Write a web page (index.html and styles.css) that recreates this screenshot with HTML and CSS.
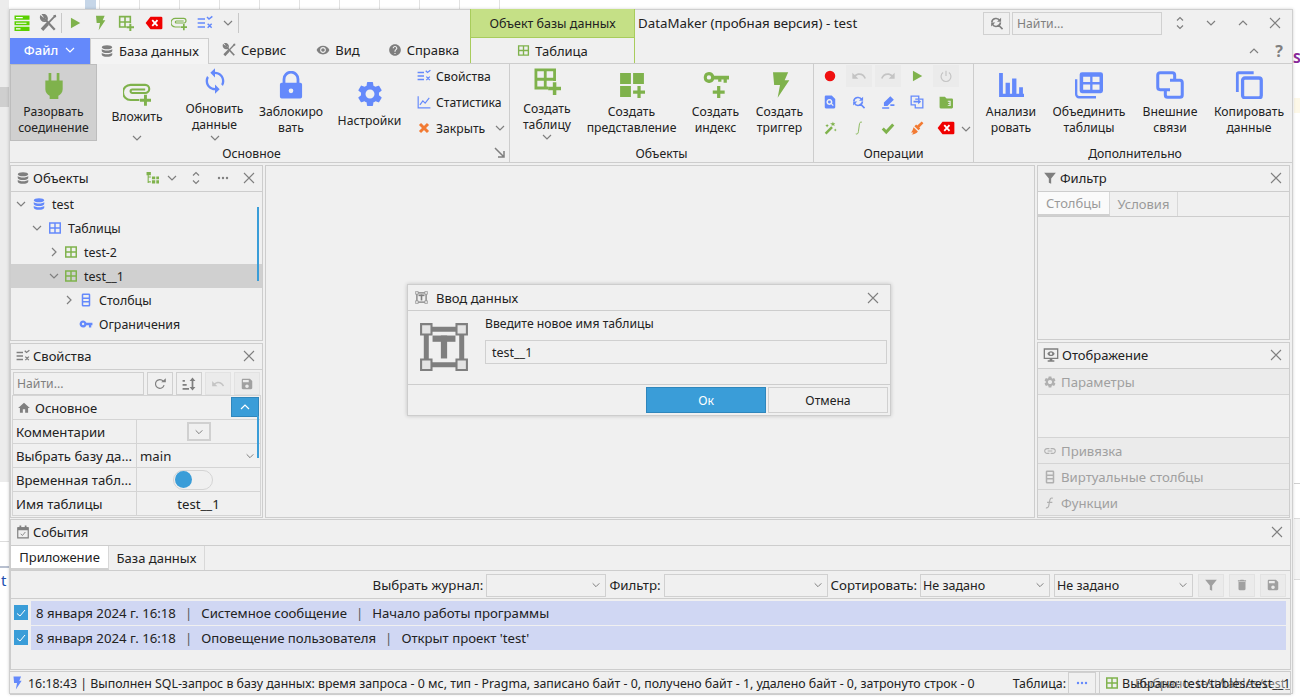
FILE: index.html
```html
<!DOCTYPE html>
<html lang="en">
<head>
    <meta charset="UTF-8">
    <title>DataMaker</title>
    <link rel="stylesheet" href="styles.css">
</head>
<body>
    <svg class="defs" xmlns="http://www.w3.org/2000/svg">
        <symbol id="db" viewBox="0 0 24 24"><path fill="currentColor" d="M12 2c5 0 9 1.500 9 3.500S17 9 12 9 3 7.500 3 5.500 7 2 12 2zM3 8.500C4.500 10.300 8 11 12 11s7.500-.7 9-2.500V12c0 2-4 3.500-9 3.500S3 14 3 12zM3 15c1.500 1.800 5 2.500 9 2.500s7.500-.7 9-2.500v3.500c0 2-4 3.500-9 3.500s-9-1.500-9-3.500z"/></symbol>
        <symbol id="tools" viewBox="0 0 24 24"><path fill="none" stroke="currentColor" stroke-width="3" d="M7 6l14 15"/><path fill="none" stroke="currentColor" stroke-width="2.500" d="M2.500 3.500a5 5 0 0 0 5.500 6l2.500-2.500a5 5 0 0 0-5-6L8 4.500 6 6.500z"/><path fill="none" stroke="currentColor" stroke-width="2.400" d="M20.500 3.500L11 13.500"/><path fill="none" stroke="currentColor" stroke-width="4.500" d="M11.500 13L4 21"/><path fill="currentColor" d="M19 1.500l3.500-.5.500 3-2.500 1z"/></symbol>
        <symbol id="play" viewBox="0 0 24 24"><path fill="currentColor" d="M5 3l16 9-16 9z"/></symbol>
        <symbol id="bolt" viewBox="0 0 24 24"><path fill="currentColor" d="M6 1h13l-3 7h4L10 23l2-11H7z"/></symbol>
        <symbol id="table" viewBox="0 0 24 24"><path fill="none" stroke="currentColor" stroke-width="2.500" d="M3 3.500h18v17H3zM3 12h18M12 3.500v17"/></symbol>
        <symbol id="table-plus" viewBox="0 0 24 24"><path fill="none" stroke="currentColor" stroke-width="2.400" d="M13 18H2.500V2.500h16V12M2.500 10.500h16M10.500 2.500V18"/><path fill="currentColor" d="M17 13h3v4h4v3h-4v4h-3v-4h-4v-3h4z"/></symbol>
        <symbol id="clear" viewBox="0 0 24 20"><path fill="currentColor" d="M7 1h15a2 2 0 0 1 2 2v14a2 2 0 0 1-2 2H7l-7-9z"/><path fill="none" stroke="#fff" stroke-width="2.600" d="M9.500 6l7.500 8M17 6l-7.500 8"/></symbol>
        <symbol id="clip" viewBox="0 0 24 24"><path fill="none" stroke="currentColor" stroke-width="1.800" d="M14 18H6.500a6 6 0 0 1 0-13H19a3.500 3.500 0 0 1 0 7H8a1.500 1.500 0 0 1 0-3h11"/><path fill="currentColor" d="M18 13.500h2.500V17H24v2.500h-3.500V23H18v-3.500h-3.500V17H18z"/></symbol>
        <symbol id="listx" viewBox="0 0 24 24"><path fill="none" stroke="currentColor" stroke-width="2.200" d="M1 6h11M1 12h11M1 18h11M15 3l3 3 5-4M16 13l6 6M22 13l-6 6"/></symbol>
        <symbol id="chart" viewBox="0 0 24 24"><path fill="none" stroke="currentColor" stroke-width="2" d="M2 2v20h21M5 17l5-7 4 4 7-9"/></symbol>
        <symbol id="cross" viewBox="0 0 24 24"><path fill="none" stroke="currentColor" stroke-width="6" d="M4 4l16 16M20 4L4 20"/></symbol>
        <symbol id="sync" viewBox="0 0 24 24"><path fill="currentColor" d="M12 4V1L8 5l4 4V6c3.310 0 6 2.690 6 6 0 1.010-.25 1.970-.7 2.800l1.460 1.460C19.540 15.030 20 13.570 20 12c0-4.420-3.580-8-8-8zm0 14c-3.310 0-6-2.690-6-6 0-1.010.25-1.970.7-2.800L5.240 7.740C4.460 8.970 4 10.430 4 12c0 4.420 3.580 8 8 8v3l4-4-4-4v3z"/></symbol>
        <symbol id="lock" viewBox="0 0 24 24"><path fill="none" stroke="currentColor" stroke-width="2.400" d="M6 11V7a6 6 0 0 1 12 0v4"/><path fill="currentColor" fill-rule="evenodd" d="M4 10h16a1.500 1.500 0 0 1 1.500 1.500V22a1.500 1.500 0 0 1-1.500 1.500H4A1.500 1.500 0 0 1 2.500 22V11.500A1.500 1.500 0 0 1 4 10zm8 5a2 2 0 1 0 0 4 2 2 0 0 0 0-4z"/></symbol>
        <symbol id="gear" viewBox="0 0 24 24"><path fill="currentColor" d="M19.140 12.940c.04-.3.06-.61.06-.94 0-.32-.02-.64-.07-.94l2.030-1.580c.18-.14.23-.41.12-.61l-1.920-3.320c-.12-.22-.37-.29-.59-.22l-2.390.96c-.5-.38-1.030-.7-1.620-.94l-.36-2.540c-.04-.24-.24-.41-.48-.41h-3.840c-.24 0-.43.17-.47.41l-.36 2.540c-.59.24-1.130.57-1.620.94l-2.390-.96c-.22-.08-.47 0-.59.22L2.740 8.870c-.12.21-.08.47.12.61l2.030 1.580c-.05.3-.09.63-.09.94s.02.64.07.94l-2.030 1.580c-.18.14-.23.41-.12.61l1.920 3.320c.12.22.37.29.59.22l2.390-.96c.5.38 1.030.7 1.620.94l.36 2.540c.05.24.24.41.48.41h3.840c.24 0 .44-.17.47-.41l.36-2.540c.59-.24 1.130-.56 1.620-.94l2.390.96c.22.08.47 0 .59-.22l1.920-3.320c.12-.22.07-.47-.12-.61l-2.010-1.580zM12 15.600c-1.980 0-3.600-1.620-3.600-3.600s1.620-3.600 3.600-3.600 3.600 1.620 3.600 3.600-1.620 3.600-3.600 3.600z"/></symbol>
        <symbol id="plug" viewBox="0 0 24 24"><path fill="currentColor" d="M7 0h2.500v7h5V0H17v7h3v8c0 3-2 5-4 6v3H8v-3c-2-1-4-3-4-6V7h3z"/></symbol>
        <symbol id="grid-plus" viewBox="0 0 24 24"><path fill="currentColor" d="M1 1h10v10H1zM13 1h10v10H13zM1 13h10v10H1zM17 13h3v4h4v3h-4v4h-3v-4h-4v-3h4z"/></symbol>
        <symbol id="key" viewBox="0 0 24 24"><path fill="currentColor" d="M12.650 10C11.830 7.670 9.610 6 7 6c-3.310 0-6 2.690-6 6s2.690 6 6 6c2.610 0 4.830-1.670 5.650-4H17v4h4v-4h2v-4H12.650zM7 14c-1.100 0-2-.9-2-2s.9-2 2-2 2 .9 2 2-.9 2-2 2z"/></symbol>
        <symbol id="key-plus" viewBox="0 0 24 24"><path fill="currentColor" fill-rule="evenodd" d="M5.500 0a5 5 0 0 1 4.800 3.500H24V7h-2v3h-3V7h-2v2h-3V7h-3.700a5 5 0 1 1-4.800-7zm0 3a2 2 0 1 0 0 4 2 2 0 0 0 0-4zM13 13h3v4h4v3h-4v4h-3v-4H9v-3h4z"/></symbol>
        <symbol id="bars" viewBox="0 0 24 24"><path fill="currentColor" d="M1 1h3.500v19H1zM1 20h23v3H1zM7 10h4v12H7zM13 6h4v16h-4zM19.500 14H23v8h-3.500z"/></symbol>
        <symbol id="join" viewBox="0 0 24 24"><path fill="none" stroke="currentColor" stroke-width="2" d="M1 7v13a2.500 2.500 0 0 0 2.500 2.500H18"/><path fill="currentColor" fill-rule="evenodd" d="M6 1h16a2 2 0 0 1 2 2v14a2 2 0 0 1-2 2H6a2 2 0 0 1-2-2V3a2 2 0 0 1 2-2zm1 4v4.500h6V5zm8 0v4.500h6V5zM7 11.500V16h6v-4.500zm8 0V16h6v-4.500z"/></symbol>
        <symbol id="links" viewBox="0 0 24 24"><path fill="none" stroke="currentColor" stroke-width="2.600" d="M16 9V3.500a2 2 0 0 0-2-2H3.500a2 2 0 0 0-2 2V14a2 2 0 0 0 2 2H12M8 15v5.500a2 2 0 0 0 2 2h10.500a2 2 0 0 0 2-2V10a2 2 0 0 0-2-2H12"/></symbol>
        <symbol id="copy" viewBox="0 0 24 24"><path fill="none" stroke="currentColor" stroke-width="2.400" d="M2 18V2.500a1 1 0 0 1 1-1h13"/><rect x="6.500" y="6" width="16" height="17" rx="2" fill="none" stroke="currentColor" stroke-width="2.800"/></symbol>
        <symbol id="eye" viewBox="0 0 24 24"><path fill="currentColor" d="M12 4.500C7 4.500 2.730 7.610 1 12c1.730 4.390 6 7.500 11 7.500s9.270-3.110 11-7.500c-1.730-4.390-6-7.500-11-7.500zM12 17c-2.760 0-5-2.240-5-5s2.240-5 5-5 5 2.240 5 5-2.240 5-5 5zm0-8c-1.660 0-3 1.340-3 3s1.340 3 3 3 3-1.340 3-3-1.340-3-3-3z"/></symbol>
        <symbol id="help" viewBox="0 0 24 24"><path fill="currentColor" d="M12 2C6.480 2 2 6.480 2 12s4.480 10 10 10 10-4.480 10-10S17.520 2 12 2zm1 17h-2v-2h2v2zm2.070-7.750l-.9.92C13.450 12.900 13 13.500 13 15h-2v-.5c0-1.100.45-2.100 1.170-2.830l1.240-1.260c.37-.36.59-.86.59-1.410 0-1.100-.9-2-2-2s-2 .9-2 2H8c0-2.210 1.790-4 4-4s4 1.790 4 4c0 .88-.36 1.680-.93 2.250z"/></symbol>
        <symbol id="chev" viewBox="0 0 12 12"><path fill="none" stroke="currentColor" stroke-width="1.200" d="M2 4l4 4 4-4"/></symbol>
        <symbol id="chev-r" viewBox="0 0 12 12"><path fill="none" stroke="currentColor" stroke-width="1.200" d="M4 2l4 4-4 4"/></symbol>
        <symbol id="caret" viewBox="0 0 12 12"><path fill="none" stroke="currentColor" stroke-width="1.200" d="M2 8l4-4 4 4"/></symbol>
        <symbol id="spin" viewBox="0 0 12 16"><path fill="none" stroke="currentColor" stroke-width="1.200" d="M3 5.500l3-3 3 3M3 10.500l3 3 3-3"/></symbol>
        <symbol id="close" viewBox="0 0 12 12"><path fill="none" stroke="currentColor" stroke-width="1.100" d="M1 1l10 10M11 1L1 11"/></symbol>
        <symbol id="corner" viewBox="0 0 12 12"><path fill="none" stroke="currentColor" stroke-width="1.500" d="M1 1l9 9M10 4v6H4"/></symbol>
        <symbol id="menu" viewBox="0 0 24 24"><path fill="#5ad000" d="M2 2h20v5.500H2zM2 9.500h20V15H2zM2 17h20v5.500H2z"/><path fill="#fff" d="M4 4h9v1.500H4zM4 11.500h14V13H4zM4 19h6v1.500H4z"/></symbol>
        <symbol id="tree" viewBox="0 0 24 24"><path fill="currentColor" d="M1 2h8v6H1zM3 8h2v14H3zM5 10h4v2H5zM11 10h6v5h-6zM19 10h5v5h-5zM5 19h4v2H5zM11 17h6v6h-6zM19 17h5v6h-5z"/></symbol>
        <symbol id="dots" viewBox="0 0 12 12"><circle cx="2" cy="6" r="1.200" fill="currentColor"/><circle cx="6" cy="6" r="1.200" fill="currentColor"/><circle cx="10" cy="6" r="1.200" fill="currentColor"/></symbol>
        <symbol id="cols" viewBox="0 0 24 24"><path fill="none" stroke="currentColor" stroke-width="2.600" d="M7 2h10a1 1 0 0 1 1 1v18a1 1 0 0 1-1 1H7a1 1 0 0 1-1-1V3a1 1 0 0 1 1-1zM6 9h12M6 15h12"/></symbol>
        <symbol id="reload" viewBox="0 0 24 24"><path fill="none" stroke="currentColor" stroke-width="2" d="M19 14a7.500 7.500 0 1 1-1.500-7"/><path fill="currentColor" d="M14 9h8V2z"/></symbol>
        <symbol id="sort" viewBox="0 0 24 24"><path fill="currentColor" d="M1 5h4v3H1zM1 12h7v3H1zM1 19h11v3H1zM18 1l5 6h-3.500v10H23l-5 6-5-6h3.500V7H13z"/></symbol>
        <symbol id="undo" viewBox="0 0 24 24"><path fill="currentColor" d="M12.500 8c-2.650 0-5.050.99-6.900 2.600L2 7v9h9l-3.620-3.620c1.390-1.160 3.160-1.880 5.120-1.880 3.540 0 6.550 2.310 7.600 5.500l2.370-.78C21.080 11.030 17.150 8 12.500 8z"/></symbol>
        <symbol id="redo" viewBox="0 0 24 24"><path fill="currentColor" transform="matrix(-1 0 0 1 24 0)" d="M12.500 8c-2.650 0-5.050.99-6.900 2.600L2 7v9h9l-3.620-3.620c1.390-1.160 3.160-1.880 5.120-1.880 3.540 0 6.550 2.310 7.600 5.500l2.370-.78C21.080 11.030 17.150 8 12.500 8z"/></symbol>
        <symbol id="save" viewBox="0 0 24 24"><path fill="currentColor" d="M17 3H5c-1.110 0-2 .9-2 2v14c0 1.100.89 2 2 2h14c1.100 0 2-.9 2-2V7l-4-4zm-5 16c-1.660 0-3-1.340-3-3s1.340-3 3-3 3 1.340 3 3-1.340 3-3 3zm3-10H5V5h10v4z"/></symbol>
        <symbol id="home" viewBox="0 0 24 24"><path fill="currentColor" d="M10 20v-6h4v6h5v-8h3L12 3 2 12h3v8z"/></symbol>
        <symbol id="filter" viewBox="0 0 24 24"><path fill="currentColor" d="M2 3h20l-8 10v9l-4-2v-7z"/></symbol>
        <symbol id="trash" viewBox="0 0 24 24"><path fill="currentColor" d="M6 19c0 1.100.9 2 2 2h8c1.100 0 2-.9 2-2V7H6v12zM19 4h-3.500l-1-1h-5l-1 1H5v2h14V4z"/></symbol>
        <symbol id="monitor" viewBox="0 0 24 24"><path fill="none" stroke="currentColor" stroke-width="2" d="M2 3h20v14H2z"/><path fill="currentColor" d="M10 17h4v3h3v2H7v-2h3zM12 6.500c2.500 0 4.500 1.500 5.500 3.500-1 2-3 3.500-5.500 3.500S7.500 12 6.500 10c1-2 3-3.500 5.500-3.500z"/><circle cx="12" cy="10" r="1.800" fill="#f0f0f0"/></symbol>
        <symbol id="link" viewBox="0 0 24 24"><path fill="currentColor" d="M3.900 12c0-1.710 1.390-3.100 3.100-3.100h4V7H7c-2.760 0-5 2.240-5 5s2.240 5 5 5h4v-1.900H7c-1.710 0-3.100-1.390-3.100-3.100zM8 13h8v-2H8v2zm9-6h-4v1.900h4c1.710 0 3.100 1.390 3.100 3.100s-1.390 3.100-3.100 3.100h-4V17h4c2.760 0 5-2.240 5-5s-2.240-5-5-5z"/></symbol>
        <symbol id="func" viewBox="0 0 24 24"><path fill="none" stroke="currentColor" stroke-width="2" d="M17 4c-4-2-5 1-6 6l-1 6c-.6 4-3 5-5 4M7 11h9"/></symbol>
        <symbol id="calendar" viewBox="0 0 24 24"><path fill="none" stroke="currentColor" stroke-width="2" d="M3 5h18v17H3z"/><path fill="currentColor" d="M3 4h18v5H3zM6 1h3v4H6zM15 1h3v4h-3z"/><path fill="none" stroke="currentColor" stroke-width="1.500" d="M8 15l3 3 5-6"/></symbol>
        <symbol id="input" viewBox="0 0 24 24"><path fill="none" stroke="currentColor" stroke-width="2.400" d="M3.500 3.500h17v17h-17z"/><path fill="#e4e4e4" stroke="currentColor" stroke-width="1" d="M1 1h5v5H1zM18 1h5v5h-5zM1 18h5v5H1zM18 18h5v5h-5z"/><rect x="6.500" y="6.500" width="11" height="3" fill="currentColor"/><rect x="10.500" y="6.500" width="3" height="11" fill="currentColor"/></symbol>
        <symbol id="rec" viewBox="0 0 24 24"><circle cx="12" cy="12" r="9" fill="currentColor"/></symbol>
        <symbol id="power" viewBox="0 0 24 24"><path fill="none" stroke="currentColor" stroke-width="2" d="M12 3v9M7 6a8.500 8.500 0 1 0 10 0"/></symbol>
        <symbol id="doc-find" viewBox="0 0 24 24"><path fill="currentColor" fill-rule="evenodd" d="M5 1h10l6 6v14a2 2 0 0 1-2 2H5a2 2 0 0 1-2-2V3a2 2 0 0 1 2-2zm6 6a5 5 0 1 0 2.900 9l3 3 1.600-1.600-3-3A5 5 0 0 0 11 7zm0 2.500a2.500 2.500 0 1 1 0 5 2.500 2.500 0 0 1 0-5z"/></symbol>
        <symbol id="find-sync" viewBox="0 0 24 24"><path fill="none" stroke="currentColor" stroke-width="2.600" d="M3 11a7.500 7.500 0 0 1 14-3M18 11a7.500 7.500 0 0 1-14 3M15.500 16.500l6 6"/><path fill="currentColor" d="M19 3v7h-7zM2 18v-7h7z"/></symbol>
        <symbol id="pen" viewBox="0 0 24 24"><path fill="currentColor" d="M16 2l6 6-11 11H5v-6zM2 21h12v2.500H2zM16 16h7v3h-7z"/></symbol>
        <symbol id="swap" viewBox="0 0 24 24"><path fill="none" stroke="currentColor" stroke-width="2.200" d="M15 7V2H2v15h6M9 7h13v15H9v-6"/><path fill="currentColor" d="M6 10h8V7l5 4.500-5 4.500v-3H6z"/></symbol>
        <symbol id="folder" viewBox="0 0 24 24"><path fill="currentColor" d="M1 3h9l3 3h9a2 2 0 0 1 2 2v13a2 2 0 0 1-2 2H3a2 2 0 0 1-2-2z"/><path fill="#f0f0f0" d="M15 10h5v9h-5v-1.500h3v-2.300h-2.500v-1.400H18V11.500h-3z"/></symbol>
        <symbol id="wand" viewBox="0 0 24 24"><path fill="currentColor" d="M14 9l3 3L6 23l-3-3zM17 1l1 3h3l-2 2 1 3-3-2-2 2V6l-3-2h4zM7 5l1 2 2 1-2 1-1 2-1-2-2-1 2-1zM21 13l.8 1.700 1.700.8-1.700.8L21 18l-.8-1.700-1.700-.8 1.700-.8z"/></symbol>
        <symbol id="integral" viewBox="0 0 24 24"><path fill="none" stroke="currentColor" stroke-width="1.500" d="M17 2c-3-1-4 1-4.500 5l-1.500 11c-.5 4-2 5-4.500 4"/></symbol>
        <symbol id="check" viewBox="0 0 24 24"><path fill="none" stroke="currentColor" stroke-width="5" d="M3 13l6 6L21 6"/></symbol>
        <symbol id="broom" viewBox="0 0 24 24"><path fill="currentColor" d="M20 1l3 3-7 7 1.500 2-3 3-7-7 3-3 2 1.500zM6 10.500l7.500 7.500c-2 3-5 5-11 5 2-1 3-2.500 3-3.500-1 .5-2.500.5-4 0 2-1.500 3.500-5 4.500-9z"/></symbol>
        <symbol id="tick" viewBox="0 0 12 12"><path fill="none" stroke="#fff" stroke-width="1" d="M2 6.500l3 2.500 5-6"/></symbol>
    </svg>

    <div class="desk-strip"></div>
    <div class="desk-patch"></div>
    <div class="desk-top"></div>
    <div class="desk-line"></div>
    <div class="desk-rule"></div>
    <div class="desk-cream"></div>
    <div class="desk-hair"></div>
    <div class="desk-box"></div>
    <span class="desk-s">S</span>
    <span class="desk-t">t</span>

    <div class="window">
        <div class="top">
            <div class="qat">
                <svg class="i18 q-menu"><use href="#menu"/></svg>
                <svg class="i18 gy q-tools"><use href="#tools"/></svg>
                <i class="vsep"></i>
                <svg class="i14 gr q-play"><use href="#play"/></svg>
                <svg class="i16 gr q-btn"><use href="#bolt"/></svg>
                <svg class="i16 gr q-btn"><use href="#table-plus"/></svg>
                <svg class="i-clear rd q-btn q-clear"><use href="#clear"/></svg>
                <svg class="i16 gr q-btn q-clip"><use href="#clip"/></svg>
                <svg class="i16 bl q-btn"><use href="#listx"/></svg>
                <svg class="i12 gy q-btn q-more"><use href="#chev"/></svg>
                <i class="vsep q-end"></i>
            </div>
            <div class="ctx-head">Объект базы данных</div>
            <div class="titlebar">
                <span class="app-title">DataMaker (пробная версия) - test</span>
                <button class="find-btn"><svg class="i14 gy"><use href="#find-sync"/></svg></button>
                <div class="field find-box">Найти...</div>
                <div class="win-ctl">
                    <svg class="i-spin gy"><use href="#spin"/></svg>
                    <svg class="i12 gy"><use href="#chev"/></svg>
                    <svg class="i12 gy"><use href="#caret"/></svg>
                    <svg class="i12 gy"><use href="#close"/></svg>
                </div>
            </div>
            <div class="tabs">
                <div class="file-tab">Файл <svg class="i12"><use href="#chev"/></svg></div>
                <div class="tab tab-on"><svg class="i14 gy"><use href="#db"/></svg>База данных</div>
                <div class="tab tab-srv"><svg class="i14 gy"><use href="#tools"/></svg>Сервис</div>
                <div class="tab tab-view"><svg class="i14 gy"><use href="#eye"/></svg>Вид</div>
                <div class="tab tab-help"><svg class="i14 gy"><use href="#help"/></svg>Справка</div>
            </div>
            <div class="ctx-tab"><svg class="i13 gr"><use href="#table"/></svg>Таблица</div>
            <div class="tabs-right">
                <svg class="i12 gy"><use href="#caret"/></svg>
                <span class="q-mark">?</span>
            </div>
        </div>

        <div class="ribbon">
            <section class="rsec sec-main">
                <div class="rbody">
                    <div class="rb rb-on rb-plug"><svg class="i26 gr"><use href="#plug"/></svg><span>Разорвать<br>соединение</span></div>
                    <div class="rb rb-attach"><svg class="i28 gr"><use href="#clip"/></svg><span>Вложить</span><svg class="i12 gy"><use href="#chev"/></svg></div>
                    <div class="rb rb-sync"><svg class="i28 bl"><use href="#sync"/></svg><span>Обновить<br>данные</span><svg class="i12 gy down"><use href="#chev"/></svg></div>
                    <div class="rb rb-lock"><svg class="i28 bl"><use href="#lock"/></svg><span>Заблокиро<br>вать</span></div>
                    <div class="rb rb-conf"><svg class="i30 bl"><use href="#gear"/></svg><span>Настройки</span></div>
                    <div class="rside">
                        <div><svg class="i14 bl"><use href="#listx"/></svg>Свойства</div>
                        <div><svg class="i14 bl"><use href="#chart"/></svg>Статистика</div>
                        <div><svg class="i12 or side-x"><use href="#cross"/></svg>Закрыть<svg class="i12 gy close-chev"><use href="#chev"/></svg></div>
                    </div>
                </div>
                <div class="rlabel label-main">Основное<svg class="i12 gy corner"><use href="#corner"/></svg></div>
            </section>
            <section class="rsec sec-obj">
                <div class="rbody">
                    <div class="rb rb-ctable"><svg class="i28 gr"><use href="#table-plus"/></svg><span>Создать<br>таблицу</span><svg class="i12 gy"><use href="#chev"/></svg></div>
                    <div class="rb rb-view"><svg class="i26 gr"><use href="#grid-plus"/></svg><span>Создать<br>представление</span></div>
                    <div class="rb rb-index"><svg class="i26 gr"><use href="#key-plus"/></svg><span>Создать<br>индекс</span></div>
                    <div class="rb rb-trig"><svg class="i28 gr"><use href="#bolt"/></svg><span>Создать<br>триггер</span></div>
                </div>
                <div class="rlabel">Объекты</div>
            </section>
            <section class="rsec sec-ops">
                <div class="ops">
                    <div class="ops-grid">
                        <span class="op"><svg class="i14 red"><use href="#rec"/></svg></span>
                        <span class="op op-off"><svg class="i16 dim"><use href="#undo"/></svg></span>
                        <span class="op op-off"><svg class="i16 dim"><use href="#redo"/></svg></span>
                        <span class="op"><svg class="i14 gr"><use href="#play"/></svg></span>
                        <span class="op op-off"><svg class="i14 dim"><use href="#power"/></svg></span>
                        <span class="op"><svg class="i14 bl"><use href="#doc-find"/></svg></span>
                        <span class="op"><svg class="i14 bl"><use href="#find-sync"/></svg></span>
                        <span class="op"><svg class="i14 bl"><use href="#pen"/></svg></span>
                        <span class="op"><svg class="i14 bl"><use href="#swap"/></svg></span>
                        <span class="op"><svg class="i14 gr"><use href="#folder"/></svg></span>
                        <span class="op"><svg class="i14 gr"><use href="#wand"/></svg></span>
                        <span class="op"><svg class="i14 gr"><use href="#integral"/></svg></span>
                        <span class="op"><svg class="i14 gr"><use href="#check"/></svg></span>
                        <span class="op"><svg class="i14 or"><use href="#broom"/></svg></span>
                        <span class="op"><svg class="i-clear rd"><use href="#clear"/></svg></span>
                    </div>
                    <svg class="i12 gy ops-chev"><use href="#chev"/></svg>
                </div>
                <div class="rlabel">Операции</div>
            </section>
            <section class="rsec sec-more">
                <div class="rbody">
                    <div class="rb rb-an"><svg class="i26 bl"><use href="#bars"/></svg><span>Анализи<br>ровать</span></div>
                    <div class="rb rb-join"><svg class="i28 bl"><use href="#join"/></svg><span>Объединить<br>таблицы</span></div>
                    <div class="rb rb-links"><svg class="i28 bl"><use href="#links"/></svg><span>Внешние<br>связи</span></div>
                    <div class="rb rb-copy"><svg class="i28 bl"><use href="#copy"/></svg><span>Копировать<br>данные</span></div>
                </div>
                <div class="rlabel label-more">Дополнительно</div>
            </section>
        </div>

        <div class="main">
            <div class="side">
                <div class="panel objects">
                    <div class="phead">
                        <svg class="i14 gy"><use href="#db"/></svg><span class="ptitle">Объекты</span>
                        <svg class="i13 gr"><use href="#tree"/></svg>
                        <svg class="i12 gy h-chev"><use href="#chev"/></svg>
                        <svg class="i-spin gy h-spin"><use href="#spin"/></svg>
                        <svg class="i12 gy h-dots"><use href="#dots"/></svg>
                        <svg class="i12 gy h-close"><use href="#close"/></svg>
                    </div>
                    <div class="tree">
                        <div class="row lv0"><svg class="i12 gy"><use href="#chev"/></svg><svg class="i14 bl"><use href="#db"/></svg>test</div>
                        <div class="row lv1"><svg class="i12 gy"><use href="#chev"/></svg><svg class="i14 bl"><use href="#table"/></svg>Таблицы</div>
                        <div class="row lv2"><svg class="i12 gy"><use href="#chev-r"/></svg><svg class="i14 gr"><use href="#table"/></svg>test-2</div>
                        <div class="row lv2 row-on"><svg class="i12 gy"><use href="#chev"/></svg><svg class="i14 gr"><use href="#table"/></svg>test__1</div>
                        <div class="row lv3"><svg class="i12 gy"><use href="#chev-r"/></svg><svg class="i14 bl"><use href="#cols"/></svg>Столбцы</div>
                        <div class="row lv3"><i class="no-chev"></i><svg class="i14 bl"><use href="#key"/></svg>Ограничения</div>
                        <i class="scroll tree-scroll"></i>
                    </div>
                </div>
                <div class="panel props">
                    <div class="phead">
                        <svg class="i14 gy"><use href="#listx"/></svg><span class="ptitle">Свойства</span>
                        <svg class="i12 gy h-close"><use href="#close"/></svg>
                    </div>
                    <div class="props-tools">
                        <div class="field props-find">Найти...</div>
                        <button class="tbtn"><svg class="i14 gy"><use href="#reload"/></svg></button>
                        <button class="tbtn"><svg class="i14 gy"><use href="#sort"/></svg></button>
                        <button class="tbtn tbtn-off"><svg class="i14 dim"><use href="#undo"/></svg></button>
                        <button class="tbtn tbtn-off"><svg class="i14 gy2"><use href="#save"/></svg></button>
                    </div>
                    <div class="grid">
                        <div class="grid-group"><svg class="i14 gy"><use href="#home"/></svg>Основное<span class="blue-btn"><svg class="i12"><use href="#caret"/></svg></span></div>
                        <div class="cell">Комментарии</div>
                        <div class="cell cell-c"><span class="mini-drop"><svg class="i10 gy"><use href="#chev"/></svg></span></div>
                        <div class="cell">Выбрать базу да...</div>
                        <div class="cell cell-sel">main<svg class="i10 gy"><use href="#chev"/></svg></div>
                        <div class="cell">Временная табл...</div>
                        <div class="cell cell-c"><span class="toggle"><i></i></span></div>
                        <div class="cell">Имя таблицы</div>
                        <div class="cell cell-c">test__1</div>
                        <i class="scroll grid-scroll"></i>
                    </div>
                </div>
            </div>

            <div class="panel center">
                <div class="dialog">
                    <div class="dlg-head"><svg class="i13 gy"><use href="#input"/></svg><span>Ввод данных</span><svg class="i12 gy"><use href="#close"/></svg></div>
                    <div class="dlg-body">
                        <svg class="dlg-icon gy"><use href="#input"/></svg>
                        <div class="dlg-form">
                            <div>Введите новое имя таблицы</div>
                            <div class="field dlg-input">test__1</div>
                        </div>
                    </div>
                    <div class="dlg-foot">
                        <button class="btn btn-ok">Ок</button>
                        <button class="btn">Отмена</button>
                    </div>
                </div>
            </div>

            <div class="side">
                <div class="panel filter">
                    <div class="phead">
                        <svg class="i14 gy"><use href="#filter"/></svg><span class="ptitle">Фильтр</span>
                        <svg class="i12 gy h-close"><use href="#close"/></svg>
                    </div>
                    <div class="subtabs muted">
                        <div class="subtab subtab-on st-cols">Столбцы</div>
                        <div class="subtab st-cond">Условия</div>
                    </div>
                </div>
                <div class="panel display">
                    <div class="phead">
                        <svg class="i16 gy"><use href="#monitor"/></svg><span class="ptitle">Отображение</span>
                        <svg class="i12 gy h-close"><use href="#close"/></svg>
                    </div>
                    <div class="fold"><svg class="i14 dim2"><use href="#gear"/></svg>Параметры</div>
                    <div class="fold-space"></div>
                    <div class="fold"><svg class="i14 dim2"><use href="#link"/></svg>Привязка</div>
                    <div class="fold"><svg class="i14 dim2"><use href="#cols"/></svg>Виртуальные столбцы</div>
                    <div class="fold"><svg class="i14 dim2"><use href="#func"/></svg>Функции</div>
                </div>
            </div>
        </div>

        <div class="panel events">
            <div class="phead">
                <svg class="i14 gy"><use href="#calendar"/></svg><span class="ptitle">События</span>
                <svg class="i12 gy h-close"><use href="#close"/></svg>
            </div>
            <div class="subtabs">
                <div class="subtab subtab-on st-app">Приложение</div>
                <div class="subtab st-base">База данных</div>
            </div>
            <div class="ev-tools">
                <span>Выбрать журнал:</span>
                <div class="field sel sel-log"><svg class="i10 gy"><use href="#chev"/></svg></div>
                <span>Фильтр:</span>
                <div class="field sel sel-flt"><svg class="i10 gy"><use href="#chev"/></svg></div>
                <span>Сортировать:</span>
                <div class="field sel sel-sort">Не задано<svg class="i10 gy"><use href="#chev"/></svg></div>
                <div class="field sel sel-sort2">Не задано<svg class="i10 gy"><use href="#chev"/></svg></div>
                <button class="tbtn tbtn-off"><svg class="i14 gy2"><use href="#filter"/></svg></button>
                <button class="tbtn tbtn-off"><svg class="i14 gy2"><use href="#trash"/></svg></button>
                <button class="tbtn tbtn-off"><svg class="i14 gy2"><use href="#save"/></svg></button>
            </div>
            <div class="ev-row">
                <span class="chk"><svg class="i12"><use href="#tick"/></svg></span>
                <div class="ev-text">8 января 2024 г. 16:18<b>|</b>Системное сообщение<b>|</b>Начало работы программы</div>
            </div>
            <div class="ev-row">
                <span class="chk"><svg class="i12"><use href="#tick"/></svg></span>
                <div class="ev-text">8 января 2024 г. 16:18<b>|</b>Оповещение пользователя<b>|</b>Открыт проект 'test'</div>
            </div>
        </div>

        <div class="status">
            <svg class="i14 bl"><use href="#bolt"/></svg>
            <span class="st-msg">16:18:43 | Выполнен SQL-запрос в базу данных: время запроса - 0 мс, тип - Pragma, записано байт - 0, получено байт - 1, удалено байт - 0, затронуто строк - 0</span>
            <span>Таблица:</span>
            <span class="st-more"><svg class="i12 bl"><use href="#dots"/></svg></span>
            <span class="st-path"><svg class="i14 gr"><use href="#table"/></svg><span class="st-smear">Выбрано: test/tables/test__1</span></span>
        </div>
    </div>
</body>
</html>
```

FILE: styles.css
```css
*{
    margin: 0;
    padding: 0;
    box-sizing: border-box;
}
body{
    background-color: white;
    color: #222;
    font-family: "Noto Sans", sans-serif;
    font-size: 12.2px;
    width: 1300px;
    height: 700px;
    overflow: hidden;
    position: relative;
}
button{
    font: inherit;
    color: inherit;
}
i{
    font-style: normal;
}
.defs{
    position: absolute;
    width: 0;
    height: 0;
}
svg{
    flex: none;
    display: block;
}
.i10{ width: 10px; height: 10px; }
.i12{ width: 12px; height: 12px; }
.i13{ width: 13px; height: 13px; }
.i14{ width: 14px; height: 14px; }
.i16{ width: 16px; height: 16px; }
.i18{ width: 18px; height: 18px; }
.i26{ width: 26px; height: 26px; }
.i28{ width: 28px; height: 28px; }
.i30{ width: 30px; height: 30px; }
.i-clear{ width: 18px; height: 14px; }
.i-spin{ width: 12px; height: 16px; }
.gy{ color: #7f7f7f; }
.gy2{ color: #a0a0a0; }
.dim{ color: #c4c4c4; }
.dim2{ color: #b0b0b0; }
.gr{ color: #7fb24c; }
.bl{ color: #6489fb; }
.rd{ color: #f00000; }
.red{ color: #f01010; }
.or{ color: #f27a32; }

/* the desktop around the window */
.desk-strip{
    position: absolute;
    left: 0;
    top: 0;
    width: 9px;
    height: 482px;
    background-color: #ececec;
}
.desk-patch{
    position: absolute;
    left: 0;
    top: 87px;
    width: 9px;
    height: 20px;
    background-color: #cfcfcf;
}
.desk-top{
    position: absolute;
    left: 9px;
    top: 0;
    width: 1284px;
    height: 9px;
    background: linear-gradient(#c6d6e8, #c6d6e8) 76px 0 / 11px 9px no-repeat,
        repeating-linear-gradient(90deg, #e2e2e2 0 1px, transparent 1px 40px) 90px 0 / 410px 9px no-repeat;
}
.desk-line{
    position: absolute;
    left: 0;
    top: 566px;
    width: 9px;
    height: 2px;
    background-color: #b8c0d0;
}
.desk-rule{
    position: absolute;
    left: 0;
    top: 541px;
    width: 9px;
    height: 1px;
    background-color: #dcdcdc;
}
.desk-cream{
    position: absolute;
    left: 1294px;
    top: 98px;
    width: 6px;
    height: 15px;
    background-color: #fdf8e8;
}
.desk-hair{
    position: absolute;
    left: 1294px;
    top: 483px;
    width: 6px;
    height: 1px;
    background-color: #d0d0d0;
}
.desk-box{
    position: absolute;
    left: 1294px;
    top: 518px;
    width: 6px;
    height: 62px;
    background-color: #f5f5f5;
    border-top: 1px solid #dcdcdc;
    border-bottom: 1px solid #dcdcdc;
}
.desk-s{
    position: absolute;
    left: 1293px;
    top: 48px;
    font-size: 14px;
    font-weight: bold;
    color: #8a2a9a;
}
.desk-t{
    position: absolute;
    left: 1px;
    top: 570px;
    font-size: 15px;
    color: #2050b0;
}

.window{
    position: absolute;
    left: 9px;
    top: 9px;
    width: 1284px;
    height: 685px;
    background-color: #f0f0f0;
    border: 1px solid #cfcfcf;
    box-shadow: 0 0 3px rgba(0,0,0,0.18);
    display: flex;
    flex-direction: column;
}

/* title and tabs */
.top{
    display: grid;
    grid-template-columns: 460px 165px 1fr;
    grid-template-rows: 28px 25px;
    border-bottom: 1px solid #cdcdcd;
    flex: none;
}
.qat{
    display: flex;
    align-items: center;
    padding: 0 0 2px 3px;
}
.q-tools{ margin-left: 8px; }
.vsep{
    width: 1px;
    height: 20px;
    background-color: #c8c8c8;
    margin-left: 4px;
}
.q-play{ margin-left: 6px; }
.q-btn{ margin-left: 10px; }
.q-clear{ margin-left: 11px; }
.q-clip{ margin-left: 8px; }
.q-more{ margin-left: 9px; }
.q-end{ margin-left: 4px; }
.ctx-head{
    background-color: #c5e086;
    border-left: 1px solid #a8cc5c;
    border-right: 1px solid #a8cc5c;
    border-bottom: 1px solid #a8cc5c;
    display: flex;
    align-items: center;
    justify-content: center;
    font-size: 12.5px;
    margin-top: -1px;
}
.ctx-tab{
    border-left: 1px solid #a8cc5c;
    border-right: 1px solid #a8cc5c;
    display: flex;
    align-items: center;
    justify-content: center;
    gap: 5px;
    font-size: 13px;
}
.titlebar{
    display: flex;
    align-items: center;
    padding: 0 0 2px 3px;
}
.app-title{
    font-size: 13.3px;
    width: 345px;
}
.find-btn{
    width: 27px;
    height: 23px;
    border: 1px solid #d0d0d0;
    background: none;
    display: flex;
    align-items: center;
    justify-content: center;
    margin-right: 2px;
}
.field{
    border: 1px solid #d0d0d0;
    display: flex;
    align-items: center;
    background-color: #f0f0f0;
}
.find-box{
    width: 150px;
    height: 23px;
    padding-left: 4px;
    color: #808080;
}
.win-ctl{
    display: flex;
    align-items: center;
    gap: 20px;
    margin-left: 12px;
}
.win-ctl .i-spin{
    margin-right: -1px;
}
.tabs{
    display: flex;
    align-items: stretch;
    font-size: 13px;
}
.file-tab{
    width: 80px;
    background-color: #6489fb;
    color: white;
    display: flex;
    align-items: center;
    justify-content: center;
    gap: 6px;
    margin-bottom: -1px;
    padding-bottom: 2px;
    font-weight: 500;
}
.tab{
    display: flex;
    align-items: center;
    gap: 5px;
    padding-bottom: 2px;
}
.tab-on{
    width: 119px;
    justify-content: center;
    background-color: #f4f4f4;
    border: 1px solid #cdcdcd;
    border-bottom: 0;
    margin-bottom: -1px;
}
.tab-srv{ margin-left: 13px; }
.tab-view{ margin-left: 30px; }
.tab-help{ margin-left: 28px; }
.tabs-right{
    display: flex;
    align-items: center;
    justify-content: flex-end;
    gap: 15px;
    padding-right: 9px;
    color: #808080;
}
.q-mark{
    font-size: 16px;
    font-weight: bold;
    color: #808080;
}

/* ribbon */
.ribbon{
    display: flex;
    height: 99px;
    flex: none;
    border-bottom: 1px solid #cdcdcd;
}
.rsec{
    display: flex;
    flex-direction: column;
    border-right: 1px solid #cdcdcd;
}
.sec-main{ width: 500px; }
.sec-obj{ width: 304px; }
.sec-ops{ width: 160px; }
.sec-more{
    flex: 1;
    border-right: 0;
}
.rbody{
    flex: 1;
    display: flex;
}
.rlabel{
    height: 18px;
    flex: none;
    text-align: center;
    position: relative;
    line-height: 17px;
    padding-top: 1px;
}
.label-main{ padding-right: 16px; }
.label-more{ padding-left: 4px; }
.corner{
    position: absolute;
    right: 3px;
    top: 3px;
}
.rb{
    display: flex;
    flex-direction: column;
    align-items: center;
    text-align: center;
    line-height: 16px;
    flex: none;
}
.rb span{
    display: block;
}
.down{
    margin-top: -1px;
}
.rb-on{
    background-color: #d0d0d0;
    border: 1px solid #bdbdbd;
    height: 77px;
}
.rb-plug{ width: 87px; padding-top: 8px; }
.rb-plug span{ margin-top: 5px; }
.rb-attach{ width: 78px; margin-left: 1px; padding-top: 15px; }
.rb-attach span{ margin-top: 2px; }
.rb-attach .i12{ margin-top: 7px; }
.rb-sync{ width: 77px; padding-top: 3px; }
.rb-sync span{ margin-top: 6px; }
.rb-lock{ width: 76px; padding-top: 7px; }
.rb-lock span{ margin-top: 5px; }
.rb-conf{ width: 81px; padding-top: 15px; }
.rb-conf span{ margin-top: 4px; }
.rside{
    margin: -1px 0 0 7px;
    flex: 1;
}
.rside div{
    display: flex;
    align-items: center;
    height: 26px;
    gap: 5px;
}
.rside .side-x{
    margin: 0 1px;
}
.close-chev{
    margin-left: 4px;
}
.rb-ctable{ width: 74px; padding-top: 3px; }
.rb-ctable span{ margin-top: 6px; }
.rb-ctable .i12{ margin-top: -2px; }
.rb-view{ width: 95px; padding-top: 8px; }
.rb-view span{ margin-top: 6px; }
.rb-index{ width: 73px; padding-top: 8px; }
.rb-index span{ margin-top: 6px; }
.rb-trig{ width: 55px; padding-top: 7px; }
.rb-trig span{ margin-top: 5px; }
.ops{
    flex: 1;
    display: flex;
    padding-left: 1px;
    margin-top: -1px;
}
.ops-grid{
    display: grid;
    grid-template-columns: repeat(5, 29px);
    grid-auto-rows: 26px;
    align-items: center;
    justify-items: center;
}
.op{
    width: 26px;
    height: 22px;
    display: flex;
    align-items: center;
    justify-content: center;
}
.op-off{
    background-color: #ebebeb;
}
.ops-chev{
    margin-top: 60px;
    margin-left: 0;
}
.rb-an{ width: 74px; padding-top: 8px; }
.rb-an span{ margin-top: 6px; }
.rb-join{ width: 82px; padding-top: 7px; }
.rb-join span{ margin-top: 5px; }
.rb-links{ width: 80px; padding-top: 7px; }
.rb-links span{ margin-top: 5px; }
.rb-copy{ width: 78px; padding-top: 7px; }
.rb-copy span{ margin-top: 5px; }

/* panels */
.main{
    display: grid;
    grid-template-columns: 253px 770px 253px;
    gap: 2px;
    padding: 2px 1px 0 0;
    height: 355px;
    flex: none;
}
.side{
    display: flex;
    flex-direction: column;
    gap: 2px;
    min-height: 0;
}
.panel{
    border: 1px solid #cdcdcd;
    min-height: 0;
}
.objects{ height: 176px; }
.props{ flex: 1; }
.filter{ height: 175px; }
.display{ flex: 1; }
.phead{
    height: 26px;
    display: flex;
    align-items: center;
    padding: 0 0 2px 5px;
    border-bottom: 1px solid #cdcdcd;
    font-size: 13px;
}
.ptitle{
    flex: 1;
    margin-left: 3px;
}
.h-chev{ margin-left: 7px; }
.h-spin{ margin-left: 12px; }
.h-dots{ margin-left: 15px; }
.h-close{
    margin-left: 14px;
    margin-right: 7px;
}
.tree{
    position: relative;
    font-size: 12.4px;
}
.row{
    height: 24px;
    display: flex;
    align-items: center;
    gap: 4px;
}
.row > svg:nth-child(2){
    margin-right: 2px;
}
.lv0{ padding-left: 4px; }
.lv0 > svg:nth-child(1), .lv1 > svg:nth-child(1){
    margin-right: 1px;
}
.lv1{ padding-left: 20px; }
.lv2{ padding-left: 37px; }
.lv3{ padding-left: 52px; }
.row-on{
    background-color: #d0d0d0;
}
.no-chev{
    width: 12px;
}
.scroll{
    position: absolute;
    right: 3px;
    width: 2px;
    background-color: #3a9dd8;
}
.tree-scroll{
    top: 15px;
    height: 74px;
}
.props-tools{
    display: flex;
    gap: 3px;
    padding: 2px 2px 0 2px;
}
.props-find{
    width: 132px;
    height: 23px;
    padding-left: 3px;
    color: #808080;
}
.tbtn{
    width: 26px;
    height: 23px;
    border: 1px solid #d0d0d0;
    background: none;
    display: flex;
    align-items: center;
    justify-content: center;
}
.tbtn-off{
    background-color: #ebebeb;
    border-color: #e2e2e2;
}
.grid{
    position: relative;
    margin: 0 1px;
    border: 1px solid #d4d4d4;
    border-bottom: 0;
    display: grid;
    grid-template-columns: 123px 1fr;
    grid-auto-rows: 24px;
}
.grid-group{
    grid-column: 1 / 3;
    display: flex;
    align-items: center;
    gap: 4px;
    padding-left: 4px;
    font-size: 13px;
    border-bottom: 1px solid #d4d4d4;
    position: relative;
}
.blue-btn{
    position: absolute;
    right: 1px;
    top: 1px;
    width: 28px;
    height: 20px;
    background-color: #3a9dd8;
    border: 1px solid #2f86bc;
    color: white;
    display: flex;
    align-items: center;
    justify-content: center;
}
.cell{
    border-bottom: 1px solid #d4d4d4;
    display: flex;
    align-items: center;
    padding-left: 3px;
    white-space: nowrap;
    overflow: hidden;
    font-size: 13.2px;
}
.cell-c{
    justify-content: center;
    border-left: 1px solid #d4d4d4;
    padding-left: 0;
}
.cell-sel{
    justify-content: space-between;
    border-left: 1px solid #d4d4d4;
    padding-right: 5px;
}
.mini-drop{
    width: 24px;
    height: 19px;
    border: 2px solid #d0d0d0;
    display: flex;
    align-items: center;
    justify-content: center;
}
.toggle{
    width: 40px;
    height: 20px;
    border: 1px solid #d4d4d4;
    border-radius: 10px;
    display: flex;
    align-items: center;
    padding-left: 1px;
    margin-right: 12px;
}
.toggle i{
    width: 17px;
    height: 17px;
    border-radius: 50%;
    background-color: #3a9dd8;
}
.grid-scroll{
    top: 20px;
    height: 42px;
    right: 1px;
}
.subtabs{
    height: 25px;
    display: flex;
    border-bottom: 1px solid #cdcdcd;
    font-size: 13px;
    white-space: nowrap;
}
.muted{
    color: #9a9a9a;
}
.subtab{
    display: flex;
    align-items: center;
    justify-content: center;
    border-right: 1px solid #d8d8d8;
}
.subtab-on{
    background-color: #fafafa;
    border-bottom: 2px solid #d0d0d0;
}
.st-cols{ width: 72px; }
.st-cond{ width: 68px; }
.st-app{ width: 98px; background-color: white; }
.st-base{ width: 96px; }
.fold{
    height: 26px;
    display: flex;
    align-items: center;
    gap: 4px;
    padding-left: 5px;
    background-color: #ebebeb;
    border-bottom: 1px solid #d4d4d4;
    color: #a0a0a0;
    font-size: 13.2px;
}
.fold-space{
    height: 43px;
    border-bottom: 1px solid #d4d4d4;
}

/* centre with dialog */
.center{
    position: relative;
}
.dialog{
    position: absolute;
    left: 141px;
    top: 118px;
    width: 484px;
    height: 132px;
    background-color: #f0f0f0;
    border: 1px solid #cdcdcd;
    box-shadow: 0 0 4px rgba(0,0,0,0.2);
    display: flex;
    flex-direction: column;
}
.dlg-head{
    height: 26px;
    display: flex;
    align-items: center;
    padding: 0 11px 0 7px;
    border-bottom: 1px solid #cdcdcd;
    font-size: 13px;
}
.dlg-head span{
    flex: 1;
    margin-left: 8px;
}
.dlg-body{
    flex: 1;
    display: flex;
}
.dlg-icon{
    width: 50px;
    height: 50px;
    margin: 11px 0 0 11px;
}
.dlg-form{
    flex: 1;
    margin-left: 16px;
    padding: 4px 3px 0 0;
}
.dlg-input{
    height: 24px;
    margin-top: 8px;
    padding-left: 6px;
    font-size: 12.5px;
}
.dlg-foot{
    height: 31px;
    border-top: 1px solid #cdcdcd;
    display: flex;
    justify-content: flex-end;
    align-items: center;
    gap: 2px;
    padding-right: 2px;
}
.btn{
    width: 120px;
    height: 26px;
    border: 1px solid #d0d0d0;
    background-color: #f0f0f0;
}
.btn-ok{
    background-color: #3a9dd8;
    border-color: #2f86bc;
    color: white;
}

/* events */
.events{
    margin-top: 1px;
    margin-right: 1px;
    height: 151px;
    flex: none;
}
.ev-tools{
    height: 28px;
    display: flex;
    align-items: center;
    justify-content: flex-end;
    gap: 3px;
    padding: 1px 4px 0 0;
    border-bottom: 1px solid #cdcdcd;
    font-size: 13.3px;
}
.ev-tools .tbtn{
    margin-left: 2px;
}
.sel{
    height: 23px;
    justify-content: space-between;
    padding: 0 4px 0 2px;
    font-size: 12.5px;
}
.sel-log{ width: 120px; justify-content: flex-end; }
.sel-flt{ width: 164px; justify-content: flex-end; }
.sel-sort{ width: 130px; }
.sel-sort2{ width: 139px; margin-left: 1px; }
.ev-row{
    display: flex;
    align-items: center;
    height: 25px;
    padding: 0 4px 0 3px;
    gap: 3px;
}
.ev-row:nth-of-type(4){
    margin-top: 1px;
}
.chk{
    width: 14px;
    height: 15px;
    background-color: #3a9dd8;
    display: flex;
    align-items: center;
    justify-content: center;
}
.ev-text{
    flex: 1;
    height: 24px;
    background-color: #d0d7f3;
    display: flex;
    align-items: center;
    padding-left: 5px;
    font-size: 13.2px;
}
.ev-text b{
    font-weight: normal;
    margin: 0 9px;
    color: #555;
}

/* status bar */
.status{
    flex: 1;
    margin: 1px 1px 0 0;
    display: flex;
    align-items: center;
    border: 1px solid #cdcdcd;
    border-left: 0;
    font-size: 12.37px;
}
.st-msg{
    flex: 1;
    margin-left: 4px;
    white-space: nowrap;
}
.st-more{
    width: 28px;
    height: 22px;
    border: 1px solid #d0d0d0;
    margin: 0 3px 0 2px;
    display: flex;
    align-items: center;
    justify-content: center;
}
.st-path{
    width: 191px;
    height: 100%;
    border-left: 1px solid #cdcdcd;
    display: flex;
    align-items: center;
    gap: 3px;
    padding-left: 5px;
    white-space: nowrap;
    overflow: hidden;
    font-size: 12.5px;
}
.st-smear{
    text-shadow: 13px 0 0 rgba(70,70,70,0.7);
}
```
